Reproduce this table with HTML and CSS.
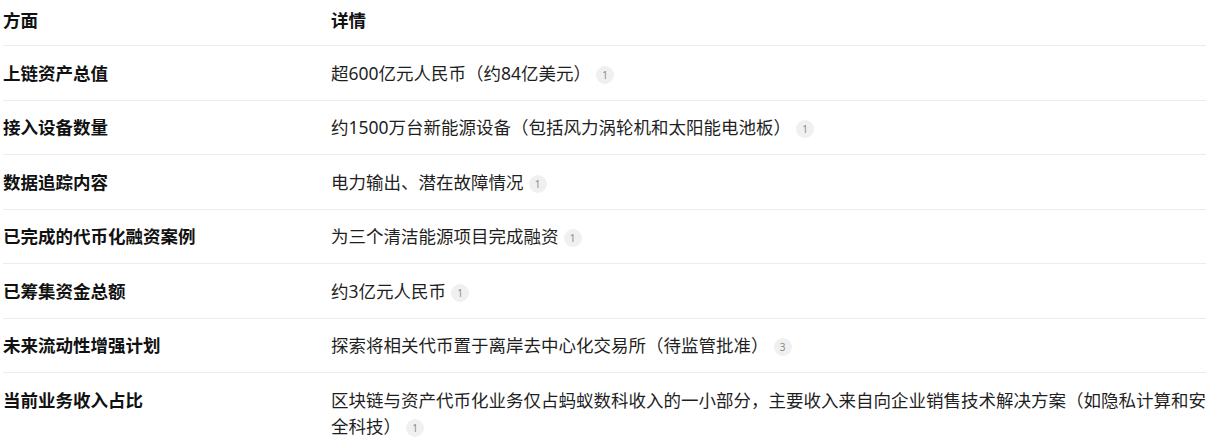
FILE: index.html
```html
<!DOCTYPE html>
<html lang="zh-CN">
<head>
    <meta charset="UTF-8">
    <meta name="viewport" content="width=device-width, initial-scale=1.0">
    <title>蚂蚁数科 资产上链</title>
    <link rel="stylesheet" href="styles.css">
</head>
<body>
    <table class="facts">
        <thead>
            <tr>
                <th class="aspect">方面</th>
                <th>详情</th>
            </tr>
        </thead>
        <tbody>
            <tr>
                <td class="aspect">上链资产总值</td>
                <td>超600亿元人民币（约84亿美元）<span class="cite">1</span></td>
            </tr>
            <tr>
                <td class="aspect">接入设备数量</td>
                <td>约1500万台新能源设备（包括风力涡轮机和太阳能电池板）<span class="cite">1</span></td>
            </tr>
            <tr>
                <td class="aspect">数据追踪内容</td>
                <td>电力输出、潜在故障情况<span class="cite">1</span></td>
            </tr>
            <tr>
                <td class="aspect">已完成的代币化融资案例</td>
                <td>为三个清洁能源项目完成融资<span class="cite">1</span></td>
            </tr>
            <tr>
                <td class="aspect">已筹集资金总额</td>
                <td>约3亿元人民币<span class="cite">1</span></td>
            </tr>
            <tr>
                <td class="aspect">未来流动性增强计划</td>
                <td>探索将相关代币置于离岸去中心化交易所（待监管批准）<span class="cite">3</span></td>
            </tr>
            <tr>
                <td class="aspect">当前业务收入占比</td>
                <td><span>区块链与资产代币化业务仅占蚂蚁数科收入的一小部分，主要收入来自向企业销售技术解决方案（如隐私计算和安</span><span>全科技）</span><span class="cite">1</span></td>
            </tr>
        </tbody>
    </table>
</body>
</html>
```

FILE: styles.css
```css
html {
    overflow: hidden;
}

body {
    font-family: "Noto Sans", "Noto Sans CJK SC", sans-serif;
    font-size: 17.5px;
    line-height: 26px;
    color: #1f1f1f;
    background-color: #fff;
    margin: 0;
    padding: 0;
}

.facts {
    border-collapse: collapse;
    margin-left: 3px;
    width: 1212px;
    table-layout: fixed;
}

.facts th,
.facts td {
    text-align: left;
    vertical-align: top;
    padding: 13.75px 0;
    border-bottom: 1px solid #ececec;
}

.facts th {
    font-weight: 700;
    color: #111;
    padding: 7px 0 12px;
}

.facts tbody tr:last-child td {
    border-bottom: none;
}

.facts .aspect {
    width: 328px;
    font-weight: 700;
    color: #111;
}

.cite {
    display: inline-block;
    width: 18px;
    height: 18px;
    line-height: 18px;
    margin-left: 5px;
    border-radius: 50%;
    background-color: #f0f0f0;
    color: #8a8a8a;
    font-size: 10px;
    text-align: center;
    vertical-align: 1px;
}
```
